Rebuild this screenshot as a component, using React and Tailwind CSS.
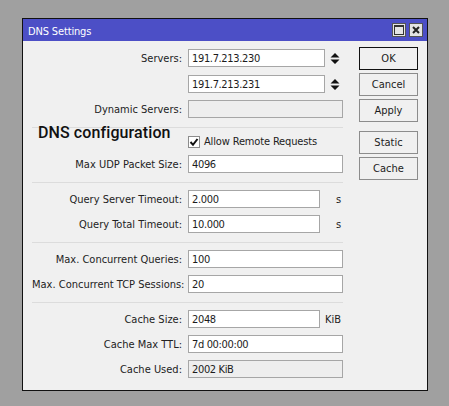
function Field({ value, className = "w-[155px]", disabled }) {
  return (
    <div
      className={`h-[18px] flex items-center pl-[3px] pt-[2px] border border-[#a6a6a6] text-[11px] tracking-[-0.35px] text-[#1c1c1c] ${className} ${
        disabled ? "bg-[#eeeeee]" : "bg-white"
      }`}
    >
      {value}
    </div>
  );
}

function Row({ label, children, className = "" }) {
  return (
    <div className={`flex items-center h-[18px] ${className}`}>
      <div className="w-[150px] mr-[6px] pt-[2px] text-right text-[11px] text-[#222222] whitespace-nowrap">{label}</div>
      {children}
    </div>
  );
}

function Section({ children, className = "" }) {
  return <div className={`flex flex-col gap-[7px] pt-[7px] pb-[9px] border-t border-[#dcdcdc] ${className}`}>{children}</div>;
}

function Stepper() {
  return (
    <svg width="10" height="11" viewBox="0 0 10 11" className="ml-[5px]">
      <path d="M5 0 L9.5 4.5 H0.5 Z M0.5 6.5 H9.5 L5 11 Z" fill="#111111" />
    </svg>
  );
}

function Btn({ children, primary, className = "" }) {
  return (
    <button
      type="button"
      className={`w-[59px] h-[23px] pt-[2px] text-[11px] text-[#1c1c1c] bg-[#f0f0f0] border-[1.5px] ${
        primary ? "border-[#111111]" : "border-[#8c8c8c]"
      } ${className}`}
    >
      {children}
    </button>
  );
}

export default function App() {
  return (
    <div
      className="w-[449px] h-[406px] bg-[#a0a0a0] pt-[18px] pl-[22px] overflow-hidden"
      style={{ fontFamily: '"DejaVu Sans Condensed", "Liberation Sans", sans-serif' }}
    >
      <div className="w-[406px] h-[373px] border border-[#111111] bg-[#f0f0f0]">
        <div className="h-[22px] bg-[#4c4fc6] flex items-center pl-[5px] pr-[4px] text-white text-[11px]">
          <span className="pt-[4px] tracking-[-0.15px]">DNS Settings</span>
          <div className="ml-auto flex gap-[3px]">
            <div className="w-[14px] h-[14px] bg-[#e4e4e4] border border-[#555555] flex items-center justify-center">
              <svg width="10" height="10" viewBox="0 0 10 10">
                <rect x="0.5" y="0.5" width="9" height="9" fill="none" stroke="#333333" />
                <rect x="0" y="0" width="10" height="2" fill="#333333" />
              </svg>
            </div>
            <div className="w-[14px] h-[14px] bg-[#e4e4e4] border border-[#555555] flex items-center justify-center">
              <svg width="8" height="8" viewBox="0 0 8 8">
                <path d="M1 1 L7 7 M7 1 L1 7" stroke="#222222" strokeWidth="2" />
              </svg>
            </div>
          </div>
        </div>

        <div className="flex pl-[9px]">
          <div className="w-[311px]">
            <div className="flex flex-col gap-[7px] pt-[8px] pb-[9px]">
              <Row label="Servers:">
                <Field value="191.7.213.230" className="w-[137px]" />
                <Stepper />
              </Row>
              <Row label="" className="mt-[1px]">
                <Field value="191.7.213.231" className="w-[137px]" />
                <Stepper />
              </Row>
              <Row label="Dynamic Servers:">
                <Field value="" disabled />
              </Row>
            </div>

            <Section>
              <div className="flex items-center h-[13px]">
                <div
                  className="w-[156px] pl-[6px] -mt-[17px] text-[16px] tracking-[0.1px] font-medium text-[#111111] whitespace-nowrap"
                  style={{ fontFamily: "Roboto, sans-serif" }}
                >
                  DNS configuration
                </div>
                <div className="w-[12px] h-[12px] bg-white border border-[#8c8c8c] flex items-center justify-center">
                  <svg width="10" height="10" viewBox="0 0 10 10">
                    <path d="M1.5 5 L4 7.8 L8.5 2" fill="none" stroke="#111111" strokeWidth="2" />
                  </svg>
                </div>
                <span className="ml-[4px] pt-[1px] text-[11px] tracking-[-0.15px] text-[#222222]">Allow Remote Requests</span>
              </div>
              <Row label="Max UDP Packet Size:">
                <Field value="4096" />
              </Row>
            </Section>

            <Section>
              <Row label="Query Server Timeout:">
                <Field value="2.000" className="w-[132px]" />
                <span className="ml-[16px] pt-[2px] text-[11px] text-[#222222]">s</span>
              </Row>
              <Row label="Query Total Timeout:">
                <Field value="10.000" className="w-[132px]" />
                <span className="ml-[16px] pt-[2px] text-[11px] text-[#222222]">s</span>
              </Row>
            </Section>

            <Section>
              <Row label="Max. Concurrent Queries:">
                <Field value="100" />
              </Row>
              <Row label="Max. Concurrent TCP Sessions:">
                <Field value="20" />
              </Row>
            </Section>

            <Section className="pb-0">
              <Row label="Cache Size:">
                <Field value="2048" className="w-[132px]" />
                <span className="ml-[5px] pt-[2px] text-[11px] text-[#222222]">KiB</span>
              </Row>
              <Row label="Cache Max TTL:">
                <Field value="7d 00:00:00" />
              </Row>
              <Row label="Cache Used:">
                <Field value="2002 KiB" disabled />
              </Row>
            </Section>
          </div>

          <div className="ml-[16px] pt-[6px] flex flex-col gap-[3px]">
            <Btn primary>OK</Btn>
            <Btn>Cancel</Btn>
            <Btn>Apply</Btn>
            <Btn className="mt-[6px]">Static</Btn>
            <Btn>Cache</Btn>
          </div>
        </div>
      </div>
    </div>
  );
}
